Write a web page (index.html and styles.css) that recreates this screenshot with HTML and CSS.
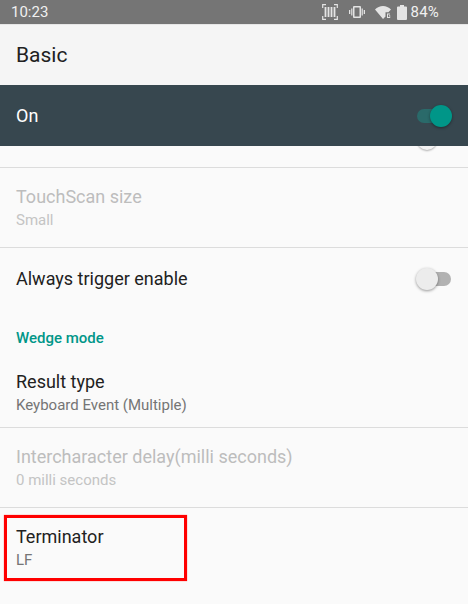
FILE: index.html
```html
<!DOCTYPE html>
<html lang="en">
<head>
  <meta charset="UTF-8" />
  <title>Basic</title>
  <link rel="stylesheet" href="styles.css">
</head>
<body>
  <div class="status">
    <span class="time">10:23</span>
    <div class="status-icons">
      <svg class="ic-scan" width="16" height="16" viewBox="0 0 16 16" fill="none" stroke="#e4e4e4">
        <path d="M.7 4V.7H4M12 .7h3.3V4M.7 12v3.3H4M12 15.3h3.3V12" stroke-width="1.2"/>
        <path d="M3.5 3v10M6.5 3v10M9.5 3v10M12.5 3v10" stroke-width="1.8"/>
      </svg>
      <svg class="ic-vibrate" width="16" height="12" viewBox="0 0 16 12" fill="#e4e4e4">
        <path d="M5 0h6a1 1 0 0 1 1 1v10a1 1 0 0 1-1 1H5a1 1 0 0 1-1-1V1a1 1 0 0 1 1-1zm.5 1.5v9h5v-9z"/>
        <path d="M0 4h1.3v4H0zM14.700 4H16v4h-1.300zM2.200 2.500h1.200v7H2.200zM12.600 2.500h1.200v7h-1.200z"/>
      </svg>
      <svg class="ic-wifi" width="16" height="13" viewBox="0 0 16 13" fill="#e4e4e4">
        <path d="M0 3.500C2.200 1.300 5 0 8 0s5.800 1.300 8 3.500l-2.600 2.700H10.500v4.200L8 13z"/>
        <path d="M12 7.500h3v1h-2v2.500h1.500V10H14V9.200h1.200V12H12z"/>
      </svg>
      <svg class="ic-battery" width="10" height="15" viewBox="0 0 10 15" fill="#e4e4e4">
        <path d="M3 0h4v1.500h2a1 1 0 0 1 1 1V14a1 1 0 0 1-1 1H1a1 1 0 0 1-1-1V2.500a1 1 0 0 1 1-1h2z"/>
      </svg>
      <span class="batt">84%</span>
    </div>
  </div>

  <div class="toolbar">Basic</div>

  <div class="onbar">
    <span>On</span>
    <div class="switch switch-on"><div class="track"></div><div class="thumb"></div></div>
  </div>

  <div class="list">
    <div class="row-cut">
      <div class="cut-thumb"></div>
    </div>

    <div class="row off">
      <div class="title">TouchScan size</div>
      <div class="sub">Small</div>
    </div>

    <div class="row row-switch no-line">
      <div class="title">Always trigger enable</div>
      <div class="switch switch-off"><div class="track"></div><div class="thumb"></div></div>
    </div>

    <div class="heading">Wedge mode</div>

    <div class="row row-top">
      <div class="title">Result type</div>
      <div class="sub">Keyboard Event (Multiple)</div>
    </div>

    <div class="row off">
      <div class="title">Intercharacter delay(milli seconds)</div>
      <div class="sub">0 milli seconds</div>
    </div>

    <div class="row no-line">
      <div class="title">Terminator</div>
      <div class="sub">LF</div>
    </div>
  </div>

  <div class="mark"></div>
</body>
</html>
```

FILE: styles.css
```css
html, body {
  margin: 0;
  padding: 0;
}
body {
  width: 468px;
  height: 604px;
  overflow: hidden;
  position: relative;
  background: #fafafa;
  font-family: Roboto, "Liberation Sans", sans-serif;
  color: #212121;
}

.status {
  height: 24px;
  background: #757575;
  color: #f0f0f0;
  display: flex;
  align-items: center;
  justify-content: space-between;
  padding: 0 29px 0 11px;
  font-size: 15px;
}
.status-icons {
  display: flex;
  align-items: center;
}
.ic-scan { margin-right: 11px; }
.ic-vibrate { margin-right: 10px; }
.ic-wifi { margin-right: 6px; }
.ic-battery { margin-right: 4px; }
.batt {
  font-size: 15px;
  letter-spacing: 0.2px;
}

.toolbar {
  height: 61px;
  box-sizing: border-box;
  background: #f5f5f5;
  border-top: 1px solid #e6e6e6;
  display: flex;
  align-items: center;
  padding-left: 16px;
  font-size: 21px;
}

.onbar {
  height: 61px;
  background: #37474f;
  color: #fff;
  display: flex;
  align-items: center;
  justify-content: space-between;
  padding: 0 16px;
  font-size: 18px;
}

.switch {
  position: relative;
  width: 36px;
  height: 22px;
}
.track {
  position: absolute;
  left: 1px;
  right: 1px;
  top: 4px;
  height: 14px;
  border-radius: 7px;
}
.thumb {
  position: absolute;
  top: 0;
  width: 22px;
  height: 22px;
  border-radius: 50%;
  box-shadow: 0 1px 3px rgba(0,0,0,0.4);
}
.switch-on .track { background: #2a6a6a; }
.switch-on .thumb { right: 0; background: #009688; }
.switch-off .track { background: #b2b2b2; }
.switch-off .thumb { left: 0; background: #ececec; }

.list {
  display: flex;
  flex-direction: column;
}
.row-cut {
  height: 21px;
  border-bottom: 1px solid #dcdcdc;
  overflow: hidden;
  position: relative;
}
.cut-thumb {
  position: absolute;
  right: 31px;
  top: -16px;
  width: 20px;
  height: 20px;
  border-radius: 50%;
  background: #f3f3f3;
  box-shadow: 0 1px 2px rgba(0,0,0,0.3);
}

.row {
  height: 79px;
  border-bottom: 1px solid #dcdcdc;
  padding: 0 16px;
  display: flex;
  flex-direction: column;
  justify-content: center;
}
.row.no-line { border-bottom: none; }
.row-switch {
  height: 61px;
  flex-direction: row;
  align-items: center;
  justify-content: space-between;
}
.row-top { height: 69px; padding-bottom: 0; }
.title {
  font-size: 18px;
  line-height: 24px;
}
.sub {
  font-size: 15px;
  line-height: 20px;
  margin-top: 1px;
  color: #757575;
}
.off .title { color: #bdbdbd; }
.off .sub { color: #c4c4c4; }

.heading {
  height: 49px;
  box-sizing: border-box;
  padding: 19px 16px 0;
  font-size: 15px;
  font-weight: 500;
  line-height: 20px;
  color: #009688;
}

.mark {
  position: absolute;
  left: 4px;
  top: 515px;
  width: 177px;
  height: 60px;
  border: 3px solid #f00;
  border-width: 3px;
  box-shadow: 0 0 1px #f55;
}
```
